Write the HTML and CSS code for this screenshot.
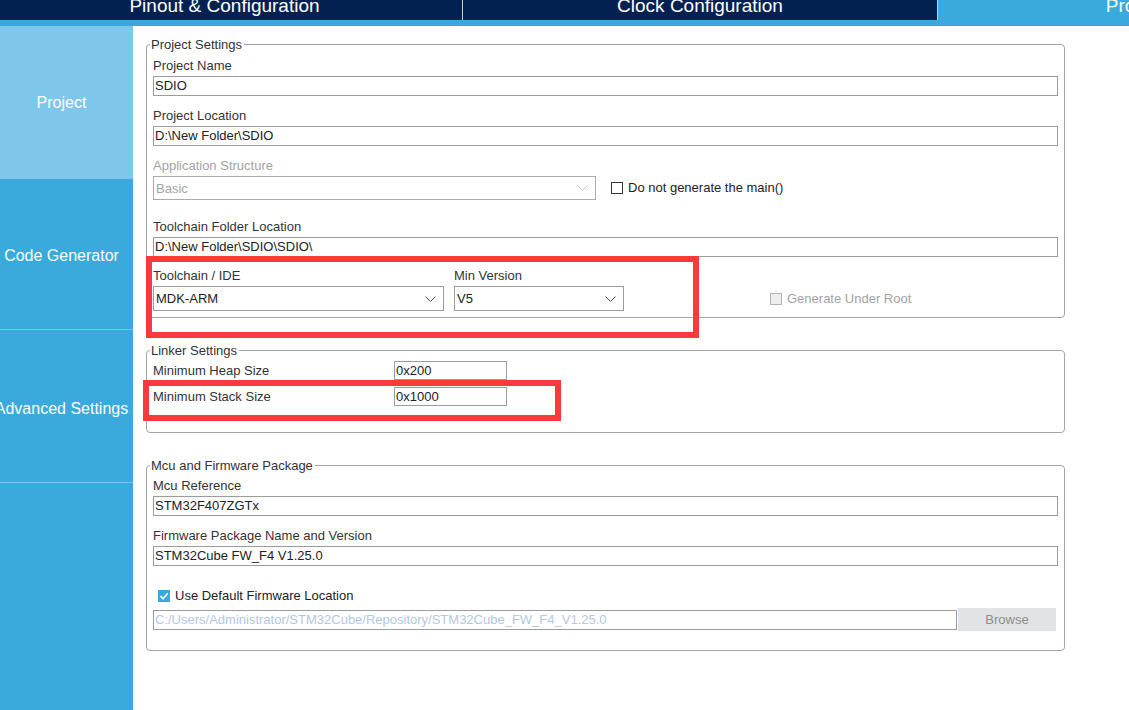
FILE: index.html
```html
<!DOCTYPE html>
<html>
<head>
<meta charset="utf-8">
<link rel="stylesheet" href="styles.css">
</head>
<body>
<div class="app">
  <div class="topbar">
    <div class="tab tab-first"><span>Pinout &amp; Configuration</span></div>
    <div class="tab"><span>Clock Configuration</span></div>
    <div class="tab tab-active"><span>Project Manager</span></div>
  </div>
  <div class="band"></div>
  <div class="body">
    <nav class="sidebar">
      <div class="side-item side-active">Project</div>
      <div class="side-item side-sep">Code Generator</div>
      <div class="side-item side-sep side-tall">Advanced Settings</div>
    </nav>
    <main class="content">
      <fieldset class="group group-project">
        <legend>Project Settings</legend>
        <div class="field">
          <label class="lbl">Project Name</label>
          <div class="input">SDIO</div>
        </div>
        <div class="field">
          <label class="lbl">Project Location</label>
          <div class="input">D:\New Folder\SDIO</div>
        </div>
        <div class="field field-app">
          <label class="lbl lbl-disabled">Application Structure</label>
          <div class="row-app">
            <div class="select select-disabled select-app">
              <span>Basic</span>
              <svg class="chev" width="11" height="6" viewBox="0 0 11 6"><polyline points="0.5,0.5 5.5,5.5 10.5,0.5" fill="none" stroke="#c4c4c4" stroke-width="1"/></svg>
            </div>
            <div class="check-item check-main">
              <span class="cbox"></span>
              <span class="check-text">Do not generate the main()</span>
            </div>
          </div>
        </div>
        <div class="field field-folder">
          <label class="lbl">Toolchain Folder Location</label>
          <div class="input">D:\New Folder\SDIO\SDIO\</div>
        </div>
        <div class="row-tool">
          <div class="col col-ide">
            <label class="lbl">Toolchain / IDE</label>
            <div class="select">
              <span>MDK-ARM</span>
              <svg class="chev" width="11" height="6" viewBox="0 0 11 6"><polyline points="0.5,0.5 5.5,5.5 10.5,0.5" fill="none" stroke="#555" stroke-width="1"/></svg>
            </div>
          </div>
          <div class="col col-ver">
            <label class="lbl">Min Version</label>
            <div class="select">
              <span>V5</span>
              <svg class="chev" width="11" height="6" viewBox="0 0 11 6"><polyline points="0.5,0.5 5.5,5.5 10.5,0.5" fill="none" stroke="#555" stroke-width="1"/></svg>
            </div>
          </div>
          <div class="check-item check-root">
            <span class="cbox cbox-disabled"></span>
            <span class="check-text check-text-disabled">Generate Under Root</span>
          </div>
        </div>
      </fieldset>

      <fieldset class="group group-linker">
        <legend>Linker Settings</legend>
        <div class="lrow">
          <span class="lrow-label">Minimum Heap Size</span>
          <div class="input input-small">0x200</div>
        </div>
        <div class="lrow">
          <span class="lrow-label">Minimum Stack Size</span>
          <div class="input input-small">0x1000</div>
        </div>
      </fieldset>

      <fieldset class="group group-mcu">
        <legend>Mcu and Firmware Package</legend>
        <div class="field">
          <label class="lbl">Mcu Reference</label>
          <div class="input">STM32F407ZGTx</div>
        </div>
        <div class="field">
          <label class="lbl">Firmware Package Name and Version</label>
          <div class="input">STM32Cube FW_F4 V1.25.0</div>
        </div>
        <div class="check-item check-default">
          <span class="cbox cbox-checked">
            <svg width="12" height="12" viewBox="0 0 12 12"><polyline points="2.5,6 5,8.7 9.8,3.2" fill="none" stroke="#ffffff" stroke-width="1.6"/></svg>
          </span>
          <span class="check-text">Use Default Firmware Location</span>
        </div>
        <div class="row-path">
          <div class="input input-path">C:/Users/Administrator/STM32Cube/Repository/STM32Cube_FW_F4_V1.25.0</div>
          <div class="btn-browse">Browse</div>
        </div>
      </fieldset>

      <div class="mark mark-tool"></div>
      <div class="mark mark-stack"></div>
    </main>
  </div>
</div>
</body>
</html>
```

FILE: styles.css
```css
* {
  box-sizing: border-box;
}

html, body {
  margin: 0;
  padding: 0;
  width: 1129px;
  height: 710px;
  overflow: hidden;
  background: #ffffff;
  font-family: "Liberation Sans", Arial, sans-serif;
}

.app {
  width: 1129px;
  height: 710px;
  display: flex;
  flex-direction: column;
}

/* ---------- top tab bar ---------- */
.topbar {
  height: 20px;
  display: flex;
  background: #022150;
  overflow: hidden;
  flex: 0 0 auto;
}

.tab {
  flex: 0 0 475px;
  border-right: 1px solid #c5cdda;
  color: #ffffff;
  font-size: 19px;
  line-height: 12px;
  text-align: center;
  white-space: nowrap;
}

.tab-first {
  flex-basis: 476px;
  margin-left: -13px;
}

.tab-active {
  background: #3aa9db;
  border-right: none;
}

.band {
  height: 6px;
  background: #3aa9db;
  flex: 0 0 auto;
}

/* ---------- body ---------- */
.body {
  flex: 1;
  display: flex;
  min-height: 0;
}

.sidebar {
  width: 133px;
  flex: 0 0 133px;
  background: #3aa9db;
  display: flex;
  flex-direction: column;
}

.side-item {
  height: 151px;
  display: flex;
  align-items: center;
  justify-content: center;
  padding-right: 10px;
  color: #ffffff;
  font-size: 16px;
  white-space: nowrap;
}

.side-active {
  height: 153px;
  background: #7ec7ea;
}

.side-sep {
  border-bottom: 1px solid #78c4ea;
  padding-top: 4px;
}

.side-tall {
  height: 153px;
  padding-top: 5px;
}

.content {
  flex: 1;
  position: relative;
  padding: 11px 64px 0 13px;
  background: #ffffff;
}

/* ---------- groups ---------- */
.group {
  margin: 0 0 25px 0;
  border: 1px solid #a2a4a8;
  border-radius: 4px;
  padding: 6px 6px 6px 6px;
  min-width: 0;
}

.group legend {
  font-size: 13px;
  line-height: 15px;
  color: #333338;
  padding: 0 2px 0 1px;
  margin-left: -3px;
}

.group-linker {
  padding: 3px 6px 26px 6px;
}

.group-mcu {
  padding: 5px 6px 19px 6px;
}

.field {
  margin-bottom: 12px;
}

.field-app {
  margin-bottom: 19px;
}

.field-folder {
  margin-bottom: 11px;
}

.lbl {
  display: block;
  font-size: 13px;
  line-height: 16px;
  color: #333338;
  margin-bottom: 2px;
  white-space: nowrap;
}

.lbl-disabled {
  color: #a3a3a3;
}

.input {
  height: 20px;
  border: 1px solid #9a9ca0;
  background: #ffffff;
  font-size: 13px;
  line-height: 18px;
  padding: 0 1px;
  color: #222226;
  white-space: nowrap;
  overflow: hidden;
}

/* selects */
.select {
  height: 25px;
  border: 1px solid #9a9ca0;
  background: #ffffff;
  display: flex;
  align-items: center;
  justify-content: space-between;
  padding: 0 7px 0 2px;
  font-size: 13px;
  color: #222226;
}

.select-disabled {
  height: 24px;
  border-color: #a9abaf;
  color: #a3a3a3;
}

.select-app {
  width: 443px;
}

.chev {
  display: block;
  flex: 0 0 auto;
}

.row-app {
  display: flex;
  align-items: center;
}

/* checkboxes */
.check-item {
  display: flex;
  align-items: center;
  font-size: 13px;
  line-height: 16px;
  white-space: nowrap;
}

.check-main {
  margin-left: 15px;
}

.cbox {
  width: 12px;
  height: 12px;
  border: 1px solid #333333;
  background: #ffffff;
  flex: 0 0 auto;
  display: block;
}

.cbox-disabled {
  border-color: #b4b4b4;
  background: #eeeeee;
}

.cbox-checked {
  border: none;
  background: #3aa9dc;
}

.cbox-checked svg {
  display: block;
}

.check-text {
  margin-left: 5px;
  color: #222226;
}

.check-text-disabled {
  color: #a3a3a3;
}

.row-tool {
  display: flex;
  gap: 10px;
}

.col-ide {
  width: 291px;
}

.col-ver {
  width: 170px;
}

.check-root {
  align-self: flex-end;
  height: 25px;
  margin-left: 136px;
}

/* linker rows */
.lrow {
  display: flex;
  align-items: center;
  margin-bottom: 7px;
}

.lrow:last-child {
  margin-bottom: 0;
}

.lrow-label {
  width: 241px;
  font-size: 13px;
  line-height: 16px;
  color: #333338;
}

.input-small {
  width: 113px;
  height: 19px;
  line-height: 17px;
}

/* mcu */
.check-default {
  margin-top: 22px;
  padding-left: 5px;
  height: 16px;
}

.row-path {
  display: flex;
  align-items: center;
  margin-top: 4px;
  height: 23px;
}

.input-path {
  width: 804px;
  color: #b3c7e3;
}

.btn-browse {
  width: 98px;
  height: 23px;
  margin-left: 1px;
  background: #e1e4e7;
  color: #8a8c8e;
  font-size: 13px;
  line-height: 23px;
  text-align: center;
}

/* red annotation marks (overlay) */
.mark {
  position: absolute;
  border: 6px solid #fa3a3a;
  pointer-events: none;
}

.mark-tool {
  left: 13px;
  top: 230px;
  width: 553px;
  height: 82px;
}

.mark-stack {
  left: 10px;
  top: 354px;
  width: 418px;
  height: 41px;
}
```
